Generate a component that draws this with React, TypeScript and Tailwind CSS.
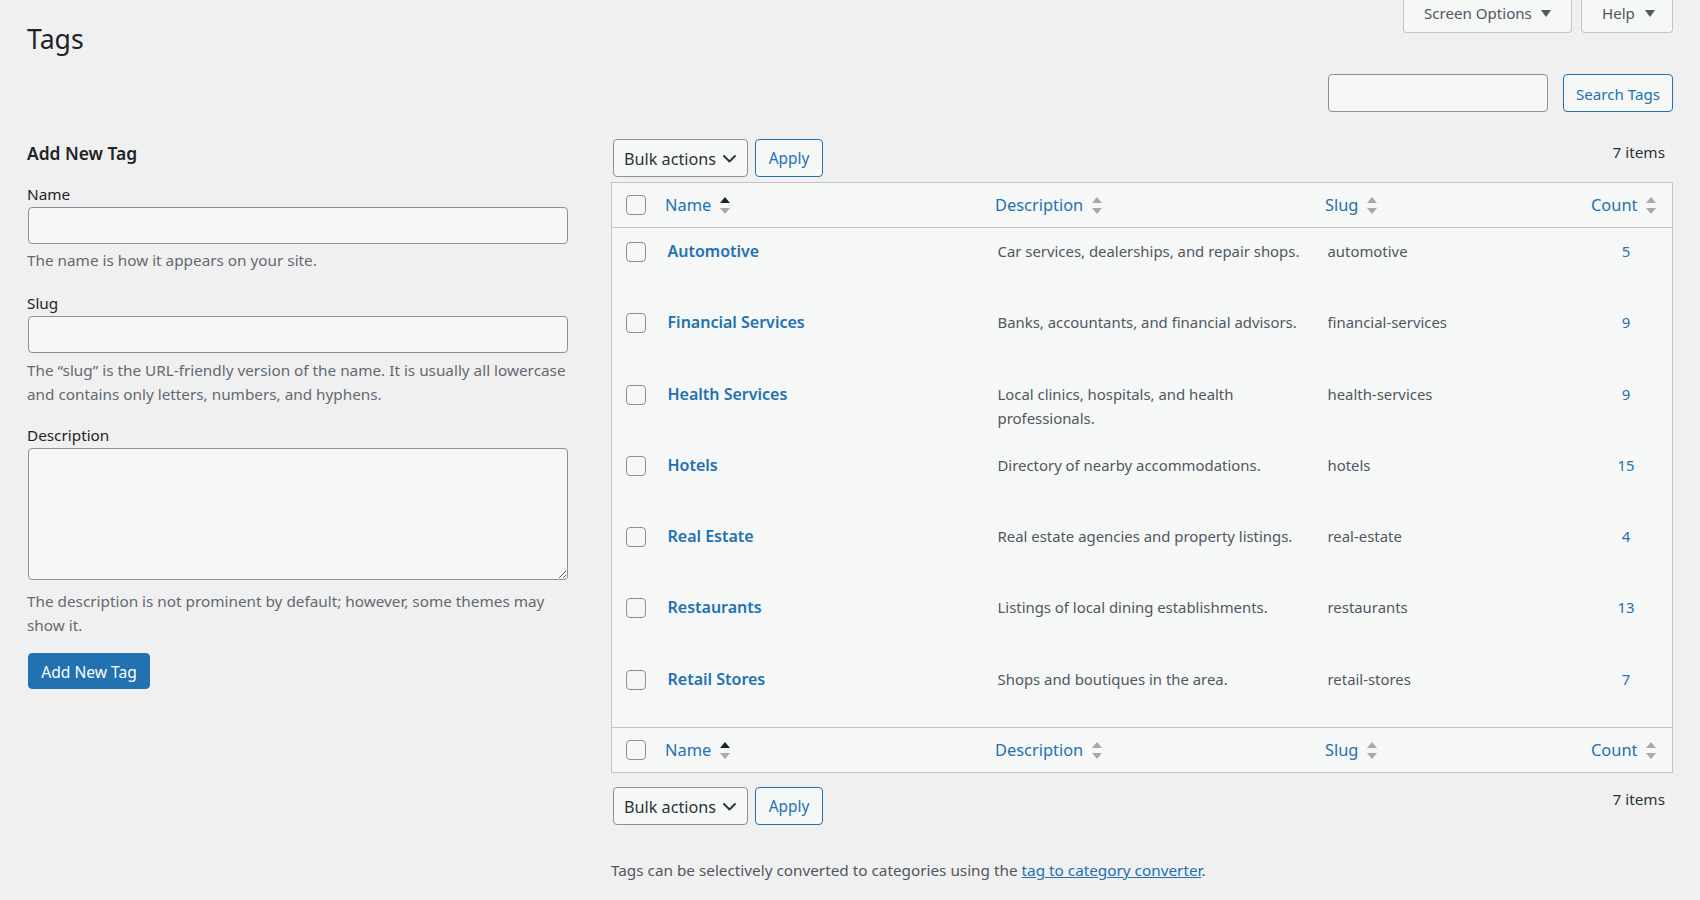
import React from "react";

function Checkbox() {
  return <div className="w-[20px] h-[20px] rounded-[4px] border border-[#8c8f94] bg-[#f6f7f7]" />;
}

function SortIcon({ active }: { active?: boolean }) {
  return (
    <span className="ml-[9px] inline-flex flex-col items-center gap-[5px]">
      <span
        className={
          active
            ? "block w-0 h-0 border-l-[5px] border-r-[5px] border-b-[6px] border-l-transparent border-r-transparent border-b-[#1d2327]"
            : "block w-0 h-0 border-l-[5px] border-r-[5px] border-b-[6px] border-l-transparent border-r-transparent border-b-[#a7aaad]"
        }
      />
      <span className="block w-0 h-0 border-l-[5px] border-r-[5px] border-t-[6px] border-l-transparent border-r-transparent border-t-[#a7aaad]" />
    </span>
  );
}

function Chevron() {
  return (
    <svg width="13" height="8" viewBox="0 0 13 8" fill="none">
      <polyline points="1,1 6.5,6.5 12,1" stroke="#2c3338" strokeWidth="1.8" strokeLinecap="round" strokeLinejoin="round" />
    </svg>
  );
}

function TableNav({ bottom }: { bottom?: boolean }) {
  return (
    <div className="flex justify-between items-start">
      <div className="flex items-center gap-[7px] ml-[2px]">
        <div className="h-[38px] w-[135px] rounded-[4px] border border-[#8c8f94] bg-[#f6f7f7] flex items-center justify-between pl-[10px] pr-[11px] pt-[1px] text-[16.2px] text-[#2c3338]">
          <span>Bulk actions</span>
          <Chevron />
        </div>
        <div className="h-[38px] w-[68px] rounded-[4px] border border-[#2271b1] bg-[#f6f7f7] flex items-center justify-center pt-[2px] text-[15.4px] text-[#2271b1]">
          Apply
        </div>
      </div>
      <div className={bottom ? "pr-[8px] text-[15.3px] text-[#2c3338]" : "pr-[8px] mt-[1px] text-[15.3px] text-[#2c3338]"}>7 items</div>
    </div>
  );
}

function HeaderRow({ footer }: { footer?: boolean }) {
  return (
    <div
      className={
        footer
          ? "grid grid-cols-[43px_330px_330px_1fr_92px] h-[45px] items-center border-t border-[#c3c4c7] text-[16.4px]"
          : "grid grid-cols-[43px_330px_330px_1fr_92px] h-[45px] items-center border-b border-[#c3c4c7] text-[16.4px]"
      }
    >
      <div className="pl-[13.5px]">
        <Checkbox />
      </div>
      <div className="pl-[10px] flex items-center text-[#2271b1]">
        Name
        <SortIcon active />
      </div>
      <div className="pl-[10px] flex items-center text-[#2271b1]">
        Description
        <SortIcon />
      </div>
      <div className="pl-[10px] flex items-center text-[#2271b1]">
        Slug
        <SortIcon />
      </div>
      <div className="pl-[11px] flex items-center text-[#2271b1]">
        Count
        <SortIcon />
      </div>
    </div>
  );
}

const rows: { name: string; desc: React.ReactNode; slug: string; count: number }[] = [
  { name: "Automotive", desc: "Car services, dealerships, and repair shops.", slug: "automotive", count: 5 },
  { name: "Financial Services", desc: "Banks, accountants, and financial advisors.", slug: "financial-services", count: 9 },
  {
    name: "Health Services",
    desc: (
      <>
        Local clinics, hospitals, and health
        <br />
        professionals.
      </>
    ),
    slug: "health-services",
    count: 9,
  },
  { name: "Hotels", desc: "Directory of nearby accommodations.", slug: "hotels", count: 15 },
  { name: "Real Estate", desc: "Real estate agencies and property listings.", slug: "real-estate", count: 4 },
  { name: "Restaurants", desc: "Listings of local dining establishments.", slug: "restaurants", count: 13 },
  { name: "Retail Stores", desc: "Shops and boutiques in the area.", slug: "retail-stores", count: 7 },
];

export default function App() {
  return (
    <div className="w-[1700px] h-[900px] overflow-hidden bg-[#f0f0f1] font-['Noto_Sans',sans-serif] text-[14.9px] leading-[24px] text-[#3c434a]">
      {/* top */}
      <div className="flex justify-between items-start px-[27px]">
        <h1 className="mt-[19px] text-[26.6px] leading-[40px] font-normal text-[#1d2327]">Tags</h1>
        <div className="flex gap-[9px] text-[15.1px]">
          <div className="h-[33px] w-[169px] rounded-b-[4px] border border-t-0 border-[#c3c4c7] bg-[#f6f7f7] flex items-start pt-[1px] pl-[20px] text-[#50575e]">
            <span>Screen Options</span>
            <span className="ml-[9px] mt-[9px] block w-0 h-0 border-l-[5px] border-r-[5px] border-t-[7px] border-l-transparent border-r-transparent border-t-[#50575e]" />
          </div>
          <div className="h-[33px] w-[92px] rounded-b-[4px] border border-t-0 border-[#c3c4c7] bg-[#f6f7f7] flex items-start pt-[1px] pl-[20px] text-[#50575e]">
            <span>Help</span>
            <span className="ml-[10px] mt-[9px] block w-0 h-0 border-l-[5px] border-r-[5px] border-t-[7px] border-l-transparent border-r-transparent border-t-[#50575e]" />
          </div>
        </div>
      </div>

      {/* search */}
      <div className="flex justify-end gap-[15px] px-[27px] mt-[15px]">
        <div className="h-[38px] w-[220px] rounded-[4px] border border-[#8c8f94] bg-[#f6f7f7]" />
        <div className="h-[38px] w-[110px] rounded-[4px] border border-[#2271b1] bg-[#f6f7f7] flex items-center justify-center pt-[1px] text-[15.1px] text-[#2271b1]">
          Search Tags
        </div>
      </div>

      {/* main */}
      <div className="flex px-[27px]">
        {/* left */}
        <div className="w-[584px] shrink-0 text-[15.3px]">
          <h2 className="mt-[28px] text-[17.4px] leading-[26px] font-semibold text-[#1d2327]">Add New Tag</h2>
          <div className="mt-[16px] text-[#1d2327]">Name</div>
          <div className="mt-[1px] ml-[1px] w-[540px] h-[37px] rounded-[4px] border border-[#8c8f94] bg-[#f6f7f7]" />
          <p className="mt-[4px] text-[#646970]">The name is how it appears on your site.</p>
          <div className="mt-[19px] text-[#1d2327]">Slug</div>
          <div className="mt-[1px] ml-[1px] w-[540px] h-[37px] rounded-[4px] border border-[#8c8f94] bg-[#f6f7f7]" />
          <p className="mt-[5px] text-[#646970]">
            <span className="whitespace-nowrap">The “slug” is the URL-friendly version of the name. It is usually all lowercase</span>
            <br />
            and contains only letters, numbers, and hyphens.
          </p>
          <div className="mt-[17px] text-[#1d2327]">Description</div>
          <textarea
            className="block mt-[1px] ml-[1px] w-[540px] h-[132px] rounded-[4px] border border-[#8c8f94] bg-[#f6f7f7] outline-none"
            readOnly
          />
          <p className="mt-[9px] text-[#646970]">
            The description is not prominent by default; however, some themes may
            <br />
            show it.
          </p>
          <div className="mt-[16px] ml-[1px] h-[36px] w-[122px] rounded-[4px] bg-[#2271b1] border border-[#2271b1] flex items-center justify-center pt-[1px] text-[15.6px] text-white">
            Add New Tag
          </div>
        </div>

        {/* right */}
        <div className="flex-1 mt-[27px]">
          <TableNav />
          <div className="mt-[5px] border border-[#c3c4c7] bg-[#f6f7f7]">
            <HeaderRow />
            {rows.map((r) => (
              <div key={r.name} className="grid grid-cols-[43px_330px_330px_1fr_92px] h-[71.3px] items-start">
                <div className="pl-[13.5px] pt-[14px]">
                  <Checkbox />
                </div>
                <div className="pl-[12.5px] pt-[10px] text-[16px] leading-[26px] font-semibold text-[#2271b1] whitespace-nowrap">
                  {r.name}
                </div>
                <div className="pl-[12.5px] pt-[11px] text-[#50575e] whitespace-nowrap">{r.desc}</div>
                <div className="pl-[12.5px] pt-[11px] text-[#50575e] whitespace-nowrap">{r.slug}</div>
                <div className="pt-[11px] text-center text-[#2271b1]">{r.count}</div>
              </div>
            ))}
            <HeaderRow footer />
          </div>
          <div className="mt-[14px]">
            <TableNav bottom />
          </div>
          <p className="mt-[33px] text-[15.3px] text-[#50575e]">
            Tags can be selectively converted to categories using the{" "}
            <span className="text-[#2271b1] underline">tag to category converter</span>.
          </p>
        </div>
      </div>
    </div>
  );
}
